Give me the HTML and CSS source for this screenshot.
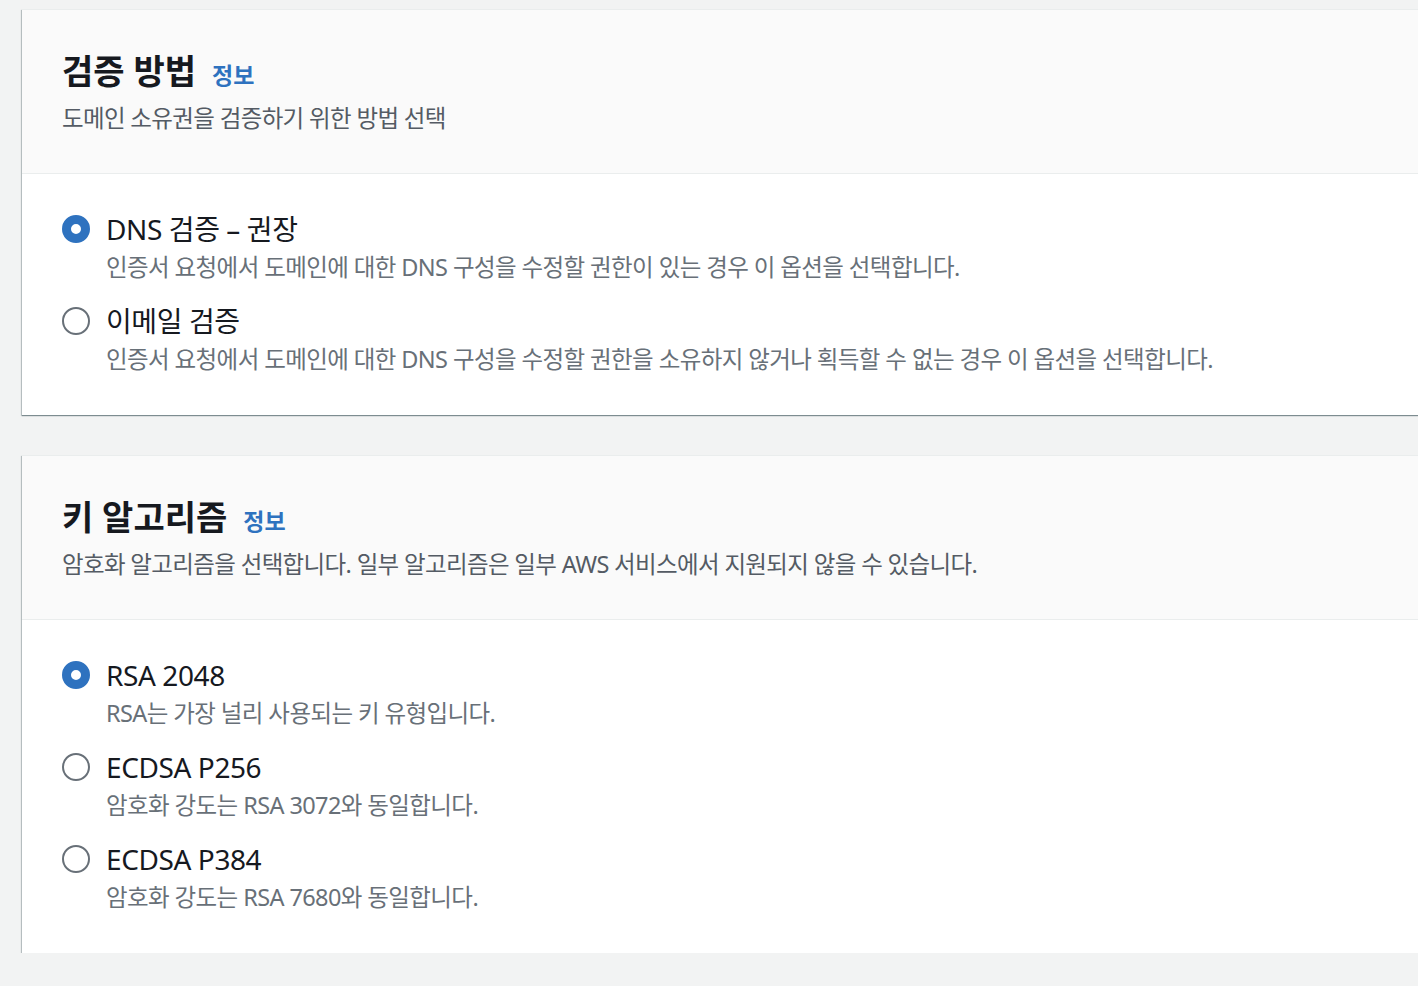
FILE: index.html
```html
<!DOCTYPE html>
<html lang="ko">
<head>
<meta charset="utf-8">
<link rel="stylesheet" href="styles.css">
</head>
<body>
<div class="page">
  <section class="card">
    <header class="card-header">
      <h2 class="title">검증 방법 <a class="info">정보</a></h2>
      <p class="subtitle">도메인 소유권을 검증하기 위한 방법 선택</p>
    </header>
    <div class="card-body">
      <div class="option">
        <span class="radio checked"></span>
        <div class="option-text">
          <div class="label">DNS 검증 – 권장</div>
          <div class="desc">인증서 요청에서 도메인에 대한 DNS 구성을 수정할 권한이 있는 경우 이 옵션을 선택합니다.</div>
        </div>
      </div>
      <div class="option">
        <span class="radio"></span>
        <div class="option-text">
          <div class="label">이메일 검증</div>
          <div class="desc">인증서 요청에서 도메인에 대한 DNS 구성을 수정할 권한을 소유하지 않거나 획득할 수 없는 경우 이 옵션을 선택합니다.</div>
        </div>
      </div>
    </div>
  </section>

  <section class="card">
    <header class="card-header">
      <h2 class="title">키 알고리즘 <a class="info">정보</a></h2>
      <p class="subtitle">암호화 알고리즘을 선택합니다. 일부 알고리즘은 일부 AWS 서비스에서 지원되지 않을 수 있습니다.</p>
    </header>
    <div class="card-body">
      <div class="option">
        <span class="radio checked"></span>
        <div class="option-text">
          <div class="label">RSA 2048</div>
          <div class="desc">RSA는 가장 널리 사용되는 키 유형입니다.</div>
        </div>
      </div>
      <div class="option">
        <span class="radio"></span>
        <div class="option-text">
          <div class="label">ECDSA P256</div>
          <div class="desc">암호화 강도는 RSA 3072와 동일합니다.</div>
        </div>
      </div>
      <div class="option">
        <span class="radio"></span>
        <div class="option-text">
          <div class="label">ECDSA P384</div>
          <div class="desc">암호화 강도는 RSA 7680와 동일합니다.</div>
        </div>
      </div>
    </div>
  </section>
</div>
</body>
</html>
```

FILE: styles.css
```css
html, body {
  margin: 0;
  padding: 0;
  background: #f2f3f3;
  overflow: hidden;
}
body {
  font-family: "Noto Sans", "Noto Sans CJK KR", sans-serif;
  color: #16191f;
}
.page {
  display: flex;
  flex-direction: column;
  gap: 40px;
  padding: 9px 0 0 22px;
}
.card {
  background: #fff;
  border-top: 1px solid #eaeded;
  box-shadow: 0 1px 1px 0 rgba(0, 28, 36, 0.35), -1px 1px 1px 0 rgba(0, 28, 36, 0.2);
  margin-right: -10px;
}
.card-header {
  background: #fafafa;
  border-bottom: 1px solid #eaeded;
  padding: 39px 40px 36px;
}
.title {
  margin: 0;
  font-size: 34px;
  line-height: 44px;
  font-weight: 700;
  display: flex;
  align-items: baseline;
  gap: 16px;
}
.info {
  color: #2e72bf;
  font-size: 23px;
  font-weight: 700;
}
.subtitle {
  margin: 2px 0 0;
  font-size: 23.5px;
  line-height: 38px;
  letter-spacing: -0.65px;
  color: #545b64;
}
.card-body {
  padding: 37px 40px 39px;
  display: flex;
  flex-direction: column;
  gap: 19px;
}
.option {
  display: flex;
  align-items: flex-start;
  gap: 16px;
}
.radio {
  flex: none;
  box-sizing: border-box;
  width: 28px;
  height: 28px;
  margin-top: 4px;
  border-radius: 50%;
  border: 2.5px solid #687078;
  background: #fff;
}
.radio.checked {
  border: 9px solid #2e72bf;
}
.label {
  font-size: 28px;
  line-height: 36px;
  letter-spacing: -0.4px;
}
.desc {
  margin-top: 3px;
  font-size: 23.5px;
  line-height: 34px;
  letter-spacing: -0.6px;
  color: #687078;
}
```
